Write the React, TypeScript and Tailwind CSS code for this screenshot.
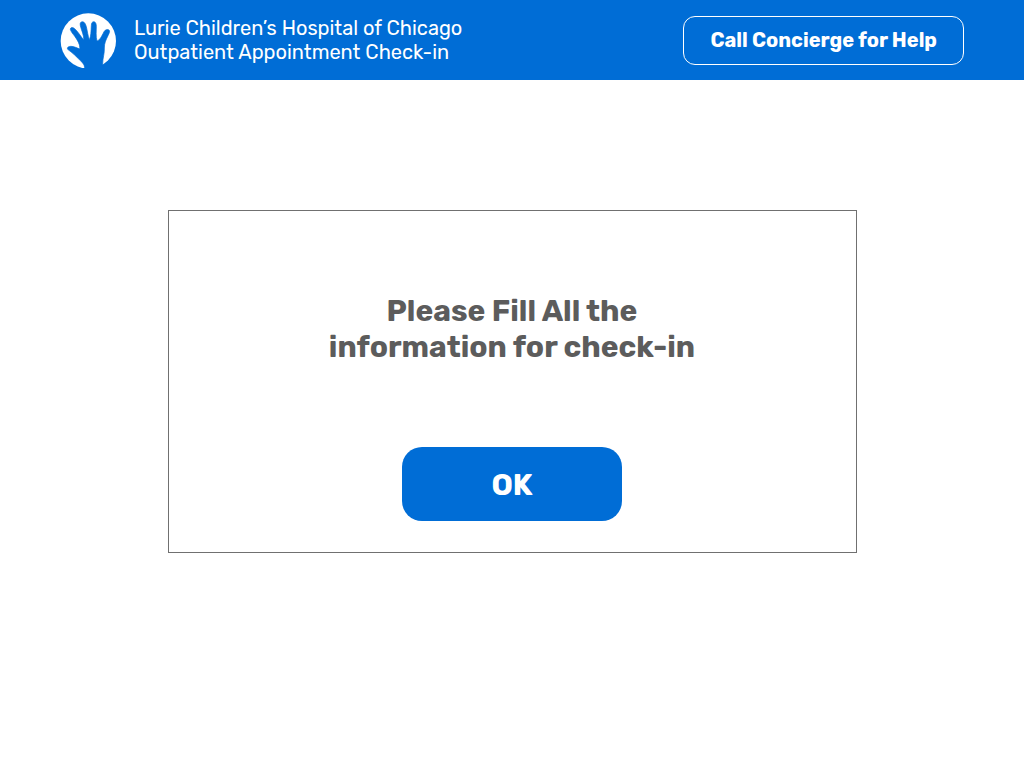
function HandLogo() {
  return (
    <svg viewBox="24 18 168 168" className="size-14 shrink-0" role="img" aria-label="Lurie Children’s">
      <circle cx="109" cy="105" r="83" fill="#fff" />
      <path
        fill="#006dd6"
        stroke="#006dd6"
        strokeWidth="2"
        d="M98 190 C98 182 97 176 91 170 C83 161 76 155 68 147 C62 141 53 135 47 130 C44 124 50 121 57 121 C66 121 75 126 83 129 C85 116 77 104 69 92 C63 84 56 76 55 70 C55 64 62 63 68 68 C77 76 85 89 95 102 C97 90 88 73 85 59 C83 50 87 47 92 47 C98 48 101 55 103 62 C106 75 108 90 112 101 C117 92 117 75 118 59 C118 50 121 47 126 47 C131 48 133 54 133 61 C133 75 131 91 135 105 C143 103 149 91 156 77 C160 70 167 69 171 72 C175 76 171 82 168 89 C161 103 157 112 157 126 C158 142 152 156 152 174 L152 190 Z"
      />
    </svg>
  );
}

export default function App() {
  return (
    <div className="min-h-screen bg-white font-['Rubik','Inter',sans-serif]">
      <header className="flex h-20 items-center justify-between gap-6 bg-[#006dd6] px-15 text-white">
        <div className="flex items-center gap-[18px]">
          <HandLogo />
          <p className="text-[20px] leading-6">
            Lurie Children’s Hospital of Chicago
            <br />
            Outpatient Appointment Check-in
          </p>
        </div>
        <button type="button" className="h-[49px] rounded-xl border border-white px-[26px] text-[20px] leading-6 font-bold">
          Call Concierge for Help
        </button>
      </header>
      <main className="px-8 pt-[130px]">
        <section className="mx-auto flex w-full max-w-[689px] flex-col items-center border border-[#707070] px-8 pt-[82px] pb-[31px]">
          <h1 className="text-center text-[30px] leading-9 font-bold text-[#5c5c5c]">
            Please Fill All the
            <br />
            information for check-in
          </h1>
          <button type="button" className="mt-[82px] h-[74px] w-[220px] rounded-[20px] bg-[#006dd6] pt-0.5 text-[30px] leading-9 font-bold text-white">
            OK
          </button>
        </section>
      </main>
    </div>
  );
}
